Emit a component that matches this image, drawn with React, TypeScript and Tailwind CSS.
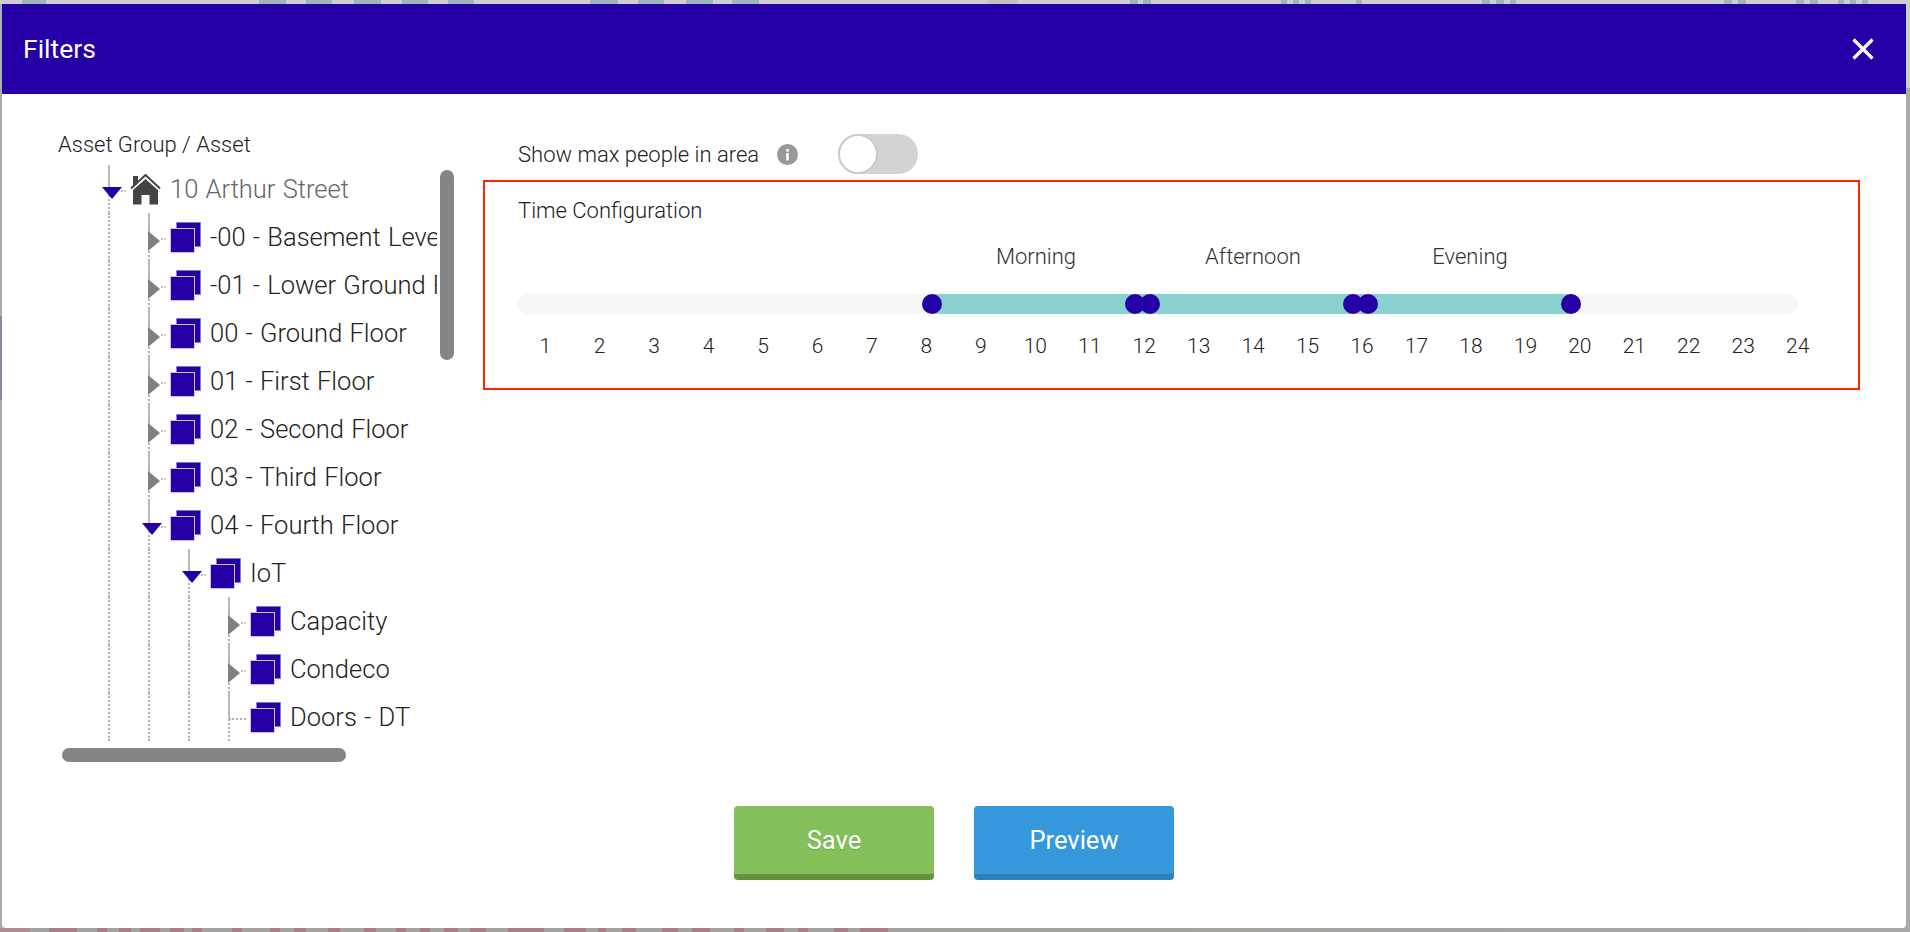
const topBlocks: [number, string][] = [
  [22, "#cfcfcf"], [24, "#a0b5bd"], [213, "#cfcfcf"], [27, "#a0b5bd"], [20, "#cfcfcf"], [26, "#a0b5bd"], [22, "#cfcfcf"], [27, "#a0b5bd"],
  [21, "#cfcfcf"], [26, "#a0b5bd"], [20, "#cfcfcf"], [26, "#a0b5bd"], [116, "#cfcfcf"], [28, "#a0b5bd"], [20, "#cfcfcf"], [26, "#a0b5bd"],
  [22, "#cfcfcf"], [27, "#a0b5bd"], [19, "#cfcfcf"], [27, "#a0b5bd"], [229, "#cfcfcf"], [29, "#c4c2c0"], [113, "#cfcfcf"], [8, "#a0b5bd"],
  [5, "#cfcfcf"], [8, "#a0b5bd"], [130, "#cfcfcf"], [6, "#a0b5bd"], [6, "#cfcfcf"], [6, "#a0b5bd"], [6, "#cfcfcf"], [6, "#a0b5bd"],
  [45, "#cfcfcf"], [6, "#a0b5bd"], [120, "#cfcfcf"], [8, "#a0b5bd"], [6, "#cfcfcf"], [8, "#a0b5bd"], [6, "#cfcfcf"], [6, "#a0b5bd"],
  [208, "#cfcfcf"], [8, "#a0b5bd"], [6, "#cfcfcf"], [8, "#a0b5bd"], [50, "#cfcfcf"], [8, "#a0b5bd"], [6, "#cfcfcf"], [8, "#a0b5bd"],
  [20, "#cfcfcf"], [6, "#a0b5bd"], [6, "#cfcfcf"], [6, "#a0b5bd"], [6, "#cfcfcf"], [6, "#a0b5bd"],
];

const bottomBlocks: [number, string][] = [
  [30, "#b08d93"], [19, "#a5a3a1"], [28, "#a97f87"], [20, "#a5a3a1"], [10, "#a97f87"], [12, "#a5a3a1"], [12, "#a97f87"], [9, "#a5a3a1"],
  [20, "#a97f87"], [10, "#a5a3a1"], [14, "#a97f87"], [8, "#a5a3a1"], [10, "#a97f87"], [30, "#a5a3a1"], [10, "#a97f87"], [28, "#a5a3a1"],
  [10, "#a97f87"], [14, "#a5a3a1"], [12, "#a97f87"], [22, "#a5a3a1"], [12, "#a97f87"], [24, "#a5a3a1"], [12, "#a97f87"], [20, "#a5a3a1"],
  [10, "#a97f87"], [14, "#a5a3a1"], [10, "#a97f87"], [14, "#a5a3a1"], [14, "#a97f87"], [12, "#a5a3a1"], [16, "#a97f87"], [22, "#a5a3a1"],
  [36, "#a97f87"], [20, "#a5a3a1"], [22, "#a97f87"], [12, "#a5a3a1"], [8, "#a97f87"], [16, "#a5a3a1"], [14, "#a97f87"], [26, "#a5a3a1"],
  [16, "#a97f87"], [14, "#a5a3a1"], [18, "#a97f87"], [24, "#a5a3a1"], [10, "#a97f87"], [22, "#a5a3a1"], [18, "#a97f87"], [14, "#a5a3a1"],
  [10, "#a97f87"], [26, "#a5a3a1"], [14, "#a97f87"], [12, "#a5a3a1"], [28, "#a97f87"], [32, "#a5a3a1"],
];

const leftEdge: [number, string][] = [
  [84, "#a6b4b6"], [228, "#ababab"], [84, "#8d84ad"], [528, "#ababab"],
];

type RowProps = {
  label: string;
  depth: number;
  toggle?: "open" | "closed";
  root?: boolean;
};

const rows: RowProps[] = [
  { label: "10 Arthur Street", depth: 0, toggle: "open", root: true },
  { label: "-00 - Basement Level", depth: 1, toggle: "closed" },
  { label: "-01 - Lower Ground Floor", depth: 1, toggle: "closed" },
  { label: "00 - Ground Floor", depth: 1, toggle: "closed" },
  { label: "01 - First Floor", depth: 1, toggle: "closed" },
  { label: "02 - Second Floor", depth: 1, toggle: "closed" },
  { label: "03 - Third Floor", depth: 1, toggle: "closed" },
  { label: "04 - Fourth Floor", depth: 1, toggle: "open" },
  { label: "IoT", depth: 2, toggle: "open" },
  { label: "Capacity", depth: 3, toggle: "closed" },
  { label: "Condeco", depth: 3, toggle: "closed" },
  { label: "Doors - DT", depth: 3 },
];

const thumbs = ["left-[404px]", "left-[607px]", "left-[622px]", "left-[825px]", "left-[840px]", "left-[1043px]"];
const hours = Array.from({ length: 24 }, (_, i) => i + 1);

function FolderIcon() {
  return (
    <svg width="31" height="31" viewBox="0 0 31 31" className="shrink-0">
      <rect x="6.5" y="0.5" width="24" height="24" fill="#2500a6" stroke="#8a78d0" strokeWidth="1" />
      <rect x="0.5" y="6.5" width="24" height="24" fill="#2500a6" stroke="#c9c1ea" strokeWidth="1" />
    </svg>
  );
}

function HomeIcon() {
  return (
    <svg width="31" height="31" viewBox="0 0 31 31" className="shrink-0">
      <path d="M3 2h5v5l-5 5z" fill="#444" />
      <path d="M1 14.5 15.5 1 30 14.5" fill="none" stroke="#444" strokeWidth="2" />
      <path d="M15.5 5 3 16v14.500h8.500V21h8v9.500H28V16z" fill="#444" />
    </svg>
  );
}

function TreeRow({ label, depth, toggle, root }: RowProps) {
  return (
    <div className="flex h-12 items-center whitespace-nowrap">
      {/* parent guides */}
      {Array.from({ length: depth }, (_, i) => (
        <div key={i} className="h-full w-10 shrink-0 pl-5">
          <div className="h-full border-l-2 border-dotted border-[#b5b5b5]" />
        </div>
      ))}
      <div className="relative h-full w-10 shrink-0">
        <div className="absolute left-5 top-0 h-[26px] w-0 border-l-2 border-[#b9b9b9]" />
        <div className="absolute left-5 top-[26px] h-[22px] w-0 border-l-2 border-dotted border-[#b5b5b5]" />
        {toggle === "open" && (
          <svg width="20" height="12" viewBox="0 0 20 12" className="absolute left-[14px] top-[22px]">
            <path d="M0 0h20L10 12z" fill="#2500a6" />
          </svg>
        )}
        {toggle === "closed" && (
          <svg width="12" height="20" viewBox="0 0 12 20" className="absolute left-5 top-[18px]">
            <path d="M0 0l12 10L0 20z" fill="#7f7f7f" />
          </svg>
        )}
        {toggle ? (
          <div className="absolute left-[33px] top-[25px] h-0 w-[5px] border-t-2 border-dotted border-[#c4c4c4]" />
        ) : (
          <div className="absolute left-[21px] top-[25px] h-0 w-[17px] border-t-2 border-dotted border-[#b5b5b5]" />
        )}
      </div>
      <div className="ml-0.5 mr-[9px] flex">{root ? <HomeIcon /> : <FolderIcon />}</div>
      <span className={root ? "text-[25.5px] font-light text-[#666] [word-spacing:1px]" : "text-[25.5px] font-light text-[#222] [word-spacing:1px]"}>
        {label}
      </span>
    </div>
  );
}

export default function App() {
  return (
    <div className="flex h-[932px] w-[1910px] flex-col overflow-hidden bg-[#ababab] font-['Roboto',sans-serif]">
      <div className="flex h-1 shrink-0 bg-[#cfcfcf]">
        {topBlocks.map(([w, c], i) => (
          <div key={i} className="shrink-0" style={{ width: w, background: c }} />
        ))}
      </div>

      <div className="flex min-h-0 flex-1">
        <div className="flex w-0.5 shrink-0 flex-col">
          {leftEdge.map(([h, c], i) => (
            <div key={i} className="shrink-0" style={{ height: h, background: c }} />
          ))}
        </div>

        {/* Modal */}
        <div className="flex w-[1904px] flex-col overflow-hidden rounded-b-[4px] bg-white">
          <div className="flex h-[90px] shrink-0 items-center justify-between bg-[#2500a6] pl-[21px] pr-[32px] text-white">
            <h1 className="text-[26.5px] font-normal">Filters</h1>
            <svg width="22" height="22" viewBox="0 0 22 22">
              <path d="M1.500 1.500l19 19M20.500 1.500l-19 19" stroke="#fff" strokeWidth="3.200" fill="none" />
            </svg>
          </div>

          <div className="flex min-h-0 flex-1">
            {/* Asset tree */}
            <div className="w-[481px] shrink-0 pl-[56px] pt-[39px]">
              <div className="text-[22px] font-light leading-6 text-[#222]">Asset Group / Asset</div>
              <div className="relative ml-[30px] mt-2">
                <div className="h-[576px] w-[349px] overflow-hidden">
                  {rows.map((row) => (
                    <TreeRow key={row.label} {...row} />
                  ))}
                </div>
                <div className="absolute left-[352px] top-[5px] h-[190px] w-3.5 rounded-[7px] bg-[#858585]" />
                <div className="absolute left-[-26px] top-[583px] h-3.5 w-[284px] rounded-[7px] bg-[#858585]" />
              </div>
            </div>

            {/* Settings */}
            <div className="w-[1377px] shrink-0 pt-10">
              <div className="flex h-10 items-center pl-[35px]">
                <span className="text-[22px] font-light text-[#222]">Show max people in area</span>
                <svg width="21" height="21" viewBox="0 0 21 21" className="ml-[18px]">
                  <circle cx="10.500" cy="10.500" r="10.500" fill="#999" />
                  <rect x="9.200" y="9" width="2.600" height="7.500" fill="#fff" />
                  <rect x="9.200" y="5" width="2.600" height="2.600" fill="#fff" />
                </svg>
                <div className="ml-[40px] flex h-10 w-20 items-center rounded-full bg-[#d3d3d3]">
                  <div className="h-10 w-10 rounded-full border-2 border-[#cacaca] bg-white" />
                </div>
              </div>

              <div className="mt-1.5 h-[210px] border-2 border-[#ff2600] pl-[33px] pt-[17px]">
                <div className="text-[22px] font-light leading-6 text-[#222]">Time Configuration</div>
                <div className="mt-[22px] flex gap-[17px] pl-[418px] text-[22px] font-light leading-6 text-[#333]">
                  <span className="w-[200px] text-center">Morning</span>
                  <span className="w-[200px] text-center">Afternoon</span>
                  <span className="w-[200px] text-center">Evening</span>
                </div>
                <div className="relative mt-[25px] h-5 w-[1280px] rounded-full bg-[#f6f7f9]">
                  <div className="absolute left-[414px] top-0 h-5 w-[638px] bg-[#88d1ce]" />
                  {thumbs.map((pos) => (
                    <div key={pos} className={"absolute top-0 h-5 w-5 rounded-full bg-[#2500a6] " + pos} />
                  ))}
                </div>
                <div className="mt-5 flex w-[1307px]">
                  {hours.map((h) => (
                    <span key={h} className="flex-1 text-center text-[21px] font-light leading-6 text-[#222]">
                      {h}
                    </span>
                  ))}
                </div>
              </div>
            </div>
          </div>

          <div className="flex shrink-0 justify-center gap-10 pb-12">
            <button className="h-[74px] w-[200px] rounded-[4px] border-b-[6px] border-[#649241] bg-[#84c15a] text-[25.5px] font-normal text-white [text-shadow:0_1px_1px_rgba(0,0,0,0.15)]">
              Save
            </button>
            <button className="h-[74px] w-[200px] rounded-[4px] border-b-[6px] border-[#2a80b9] bg-[#3598dc] text-[25.5px] font-normal text-white">
              Preview
            </button>
          </div>
        </div>

        <div className="flex w-1 shrink-0 flex-col bg-[#ababab]">
          <div className="h-[84px] shrink-0 bg-[#cfcfcf]" />
        </div>
      </div>

      <div className="flex h-1 shrink-0 bg-gradient-to-r from-[#9b9b98] to-[#a8a8a6]">
        {bottomBlocks.map(([w, c], i) => (
          <div key={i} className="shrink-0" style={{ width: w, background: c }} />
        ))}
      </div>
    </div>
  );
}
